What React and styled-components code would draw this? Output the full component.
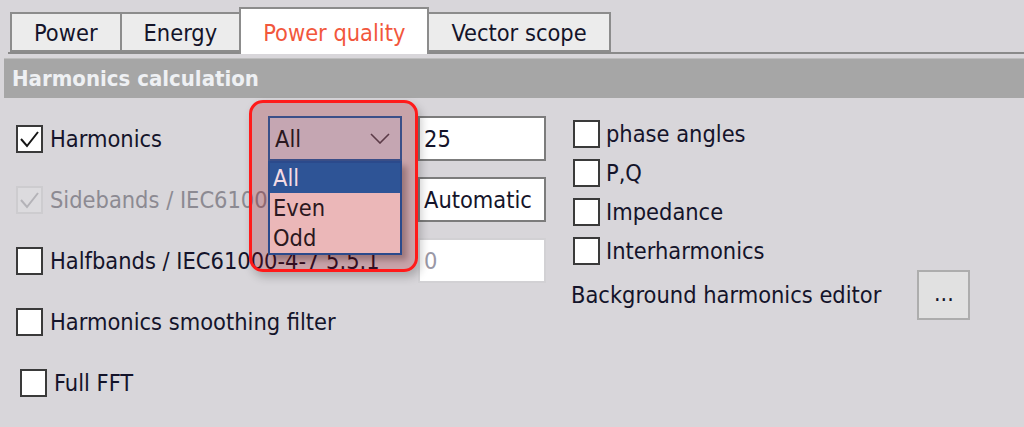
import React from 'react'
import styled, { createGlobalStyle } from 'styled-components';

const GlobalStyle = createGlobalStyle`
 html, body {
  margin: 0;
  padding: 0;
  background: #d8d6da;
 }
 body {
  font-family: "DejaVu Sans Condensed", "Liberation Sans", sans-serif;
 }
`;

const Page = styled.div`
 width: 1024px;
 height: 427px;
 overflow: hidden;
 background: #d8d6da;
 color: #14142a;
 font-size: 23.4px;
`;

const TabBar = styled.div`
 display: flex;
 align-items: flex-end;
 box-sizing: border-box;
 height: 54px;
 margin-left: 8px;
 border-bottom: 2px solid #8a8a8a;
`;

const Tab = styled.div`
 box-sizing: border-box;
 display: flex;
 align-items: center;
 justify-content: center;
 position: relative;
 height: ${({ $active }) => ($active ? 47 : 40)}px;
 padding: ${({ $active }) => ($active ? '3px 22px 0' : '1px 22px 0')};
 margin-left: -2px;
 margin-bottom: ${({ $active }) => ($active ? -2 : 0)}px;
 background: ${({ $active }) => ($active ? '#ffffff' : '#ececec')};
 border: 2px solid #8c8c8c;
 border-bottom: ${({ $active }) => ($active ? 'none' : '2px solid #8c8c8c')};
 color: ${({ $active }) => ($active ? '#f2573c' : '#14142a')};
 z-index: ${({ $active }) => ($active ? 1 : 0)};
 &:first-child {
  margin-left: 2px;
 }
`;

const SectionHeader = styled.div`
 box-sizing: border-box;
 height: 40px;
 margin: 4px 0 0 4px;
 padding-left: 8px;
 display: flex;
 align-items: center;
 background: #a6a6a6;
 border-top: 1px solid #bdbdbd;
 color: #eef0f3;
 font-weight: 700;
 font-size: 22px;
`;

const Body = styled.div`
 display: flex;
 padding-top: 18px;
`;

const LeftGrid = styled.div`
 display: grid;
 grid-template-columns: 233px 169px 128px;
 grid-auto-rows: 45px;
 row-gap: 16px;
 padding-left: 16px;
`;

const CheckRow = styled.label`
 display: flex;
 align-items: center;
 gap: 7px;
 white-space: nowrap;
 grid-column: span ${({ $span }) => $span || 1};
 padding-left: ${({ $indent }) => $indent || 0}px;
 color: ${({ $disabled }) => ($disabled ? '#8c8a92' : '#14142a')};
`;

const Box = styled.span`
 box-sizing: border-box;
 flex: none;
 width: 27px;
 height: 28px;
 display: flex;
 align-items: center;
 justify-content: center;
 background: ${({ $disabled }) => ($disabled ? '#dcdbde' : '#ffffff')};
 border: 2px solid ${({ $disabled }) => ($disabled ? '#cdcccf' : '#3a3a3a')};
`;

const ComboCell = styled.div`
 position: relative;
 padding-left: 19px;
 padding-right: 16px;
`;

const Highlight = styled.div`
 position: absolute;
 left: 0;
 top: -16px;
 width: 169px;
 height: 172px;
 box-sizing: border-box;
 border: 3px solid #ff1a1a;
 border-radius: 14px;
 background: rgba(150, 0, 12, 0.24);
 box-shadow: 3px 5px 10px rgba(0, 0, 0, 0.22);
 z-index: 2;
`;

const Combo = styled.div`
 position: relative;
 z-index: 3;
 box-sizing: border-box;
 height: 45px;
 display: flex;
 align-items: center;
 justify-content: space-between;
 padding: 0 10px 0 5px;
 background: #c5a6b2;
 border: 2px solid #3b4f88;
 color: #2a1820;
`;

const Dropdown = styled.ul`
 position: absolute;
 z-index: 3;
 left: 19px;
 top: 45px;
 width: 134px;
 box-sizing: border-box;
 margin: 0;
 padding: 0;
 list-style: none;
 border: 2px solid #2b4a8c;
 background: #ebb7b8;
 box-shadow: 5px 5px 6px rgba(40, 0, 0, 0.28);
`;

const Option = styled.li`
 height: 30px;
 display: flex;
 align-items: center;
 padding-left: 3px;
 background: ${({ $selected }) => ($selected ? '#2e5496' : 'transparent')};
 color: ${({ $selected }) => ($selected ? '#f4dbe4' : '#2a1820')};
`;

const TextBox = styled.div`
 box-sizing: border-box;
 height: 45px;
 display: flex;
 align-items: center;
 padding-left: 4px;
 background: #ffffff;
 border: 2px solid ${({ $disabled }) => ($disabled ? '#d2d1d4' : '#7c7c7c')};
 color: ${({ $disabled }) => ($disabled ? '#9a98a6' : '#14142a')};
`;

const RightCol = styled.div`
 display: flex;
 flex-direction: column;
 gap: 11px;
 margin-left: 25px;
 padding-top: 4px;
`;

const RightCheck = styled.label`
 display: flex;
 align-items: center;
 gap: 6px;
 height: 28px;
 margin-left: 2px;
 white-space: nowrap;
`;

const EditorRow = styled.div`
 display: flex;
 align-items: center;
 gap: 36px;
 margin-top: -6px;
`;

const DotsButton = styled.button`
 box-sizing: border-box;
 width: 53px;
 height: 50px;
 padding: 0 0 4px;
 background: #e1e1e1;
 border: 2px solid #adadad;
 font-family: inherit;
 font-size: 23px;
 color: #14142a;
`;

const CheckMark = ({ color }) => (
  <svg width="21" height="20" viewBox="0 0 21 20">
    <polyline points="2,10 8,17 19,3" fill="none" stroke={color} strokeWidth="2" />
  </svg>
);

const Chevron = () => (
  <svg width="20" height="11" viewBox="0 0 20 11">
    <polyline points="1,1 10,10 19,1" fill="none" stroke="#5c3b48" strokeWidth="1.6" />
  </svg>
);

const Check = ({ label, checked, disabled, span, indent }) => (
  <CheckRow $span={span} $indent={indent} $disabled={disabled}>
    <Box $disabled={disabled}>
      {checked && <CheckMark color={disabled ? '#b4b3b8' : '#151515'} />}
    </Box>
    {label}
  </CheckRow>
);

const tabs = ['Power', 'Energy', 'Power quality', 'Vector scope'];
const options = ['All', 'Even', 'Odd'];
const rightChecks = ['phase angles', 'P,Q', 'Impedance', 'Interharmonics'];

const App = () => {
  return (
    <Page>
      <GlobalStyle />
      <TabBar>
        {tabs.map((t) => (
          <Tab key={t} $active={t === 'Power quality'}>{t}</Tab>
        ))}
      </TabBar>
      <SectionHeader>Harmonics calculation</SectionHeader>
      <Body>
        <LeftGrid>
          <Check label="Harmonics" checked />
          <ComboCell>
            <Highlight />
            <Combo>
              All
              <Chevron />
            </Combo>
            <Dropdown>
              {options.map((o) => (
                <Option key={o} $selected={o === 'All'}>{o}</Option>
              ))}
            </Dropdown>
          </ComboCell>
          <TextBox>25</TextBox>

          <Check label="Sidebands / IEC61000-4-7 5.5.1" checked disabled span={2} />
          <TextBox>Automatic</TextBox>

          <Check label="Halfbands / IEC61000-4-7 5.5.1" span={2} />
          <TextBox $disabled>0</TextBox>

          <Check label="Harmonics smoothing filter" span={3} />
          <Check label="Full FFT" span={3} indent={4} />
        </LeftGrid>
        <RightCol>
          {rightChecks.map((c) => (
            <RightCheck key={c}>
              <Box />
              {c}
            </RightCheck>
          ))}
          <EditorRow>
            Background harmonics editor
            <DotsButton>...</DotsButton>
          </EditorRow>
        </RightCol>
      </Body>
    </Page>
  )
}

export default App
